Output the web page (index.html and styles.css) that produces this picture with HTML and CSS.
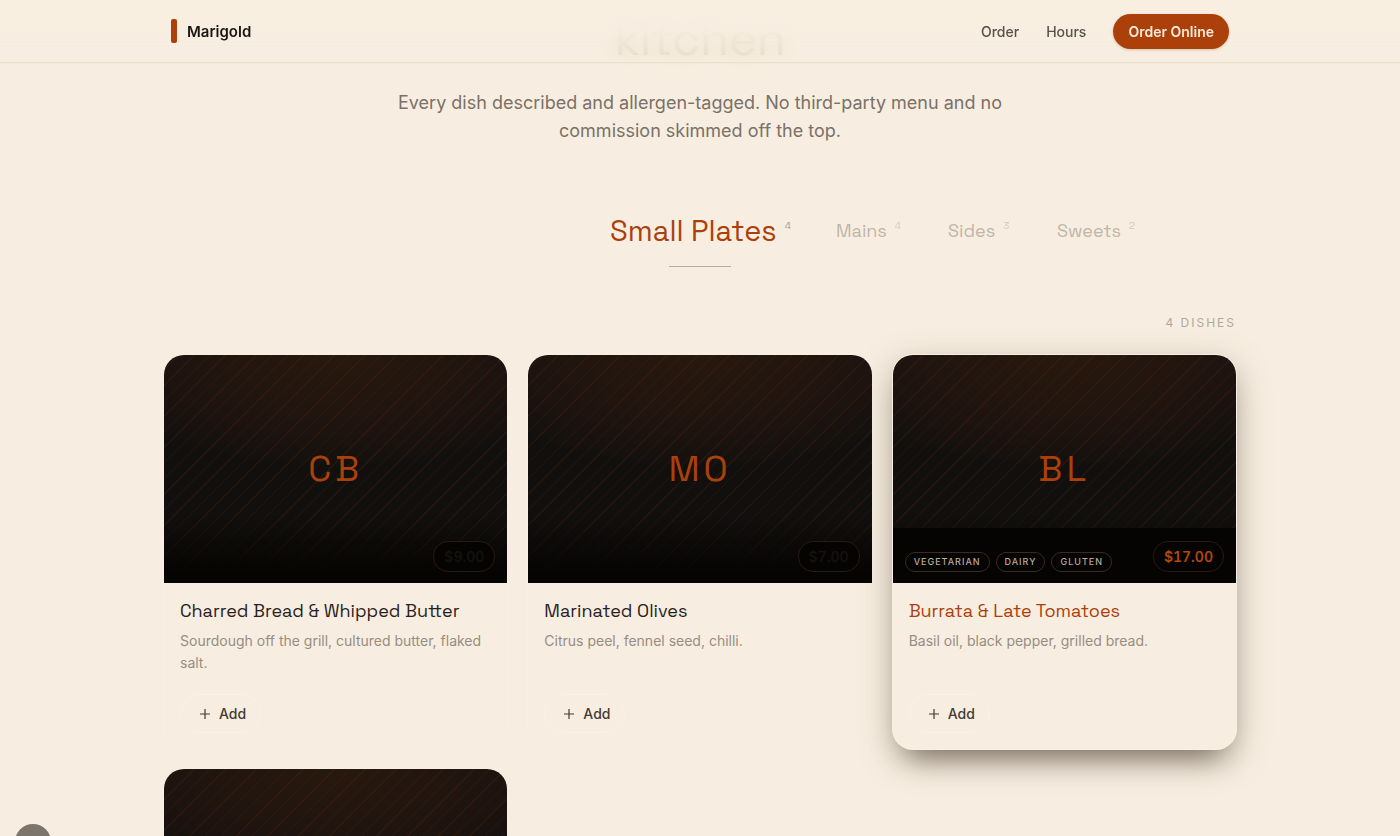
FILE: index.html
```html
<!DOCTYPE html>
<html lang="en">
<head>
<meta charset="utf-8">
<meta name="viewport" content="width=device-width, initial-scale=1">
<title>Marigold</title>
<link rel="stylesheet" href="styles.css">
</head>
<body>
<header class="site-header">
  <div class="header-inner">
    <a class="brand" href="#"><span class="brand-mark"></span>Marigold</a>
    <nav class="site-nav">
      <a href="#order">Order</a>
      <a href="#hours">Hours</a>
      <a class="nav-cta" href="#online">Order Online</a>
    </nav>
  </div>
</header>
<main class="page">
  <h1 class="hero-title">kitchen</h1>
  <p class="lead">Every dish described and allergen-tagged. No third-party menu and no commission skimmed off the top.</p>
  <div class="tabs" role="tablist">
    <button class="tab tab-active" role="tab" aria-selected="true">Small Plates<sup>4</sup></button>
    <button class="tab" role="tab" aria-selected="false">Mains<sup>4</sup></button>
    <button class="tab" role="tab" aria-selected="false">Sides<sup>3</sup></button>
    <button class="tab" role="tab" aria-selected="false">Sweets<sup>2</sup></button>
  </div>
  <div class="tab-rule"></div>
  <p class="count">4 DISHES</p>
  <section class="grid">
    <article class="card">
      <div class="photo"><span class="initials">CB</span><span class="price">$9.00</span></div>
      <div class="card-body">
        <h2>Charred Bread &amp; Whipped Butter</h2>
        <p>Sourdough off the grill, cultured butter, flaked salt.</p>
        <button class="add"><svg viewBox="0 0 12 12" aria-hidden="true"><path d="M6 1v10M1 6h10"/></svg>Add</button>
      </div>
    </article>
    <article class="card">
      <div class="photo"><span class="initials">MO</span><span class="price">$7.00</span></div>
      <div class="card-body">
        <h2>Marinated Olives</h2>
        <p>Citrus peel, fennel seed, chilli.</p>
        <button class="add"><svg viewBox="0 0 12 12" aria-hidden="true"><path d="M6 1v10M1 6h10"/></svg>Add</button>
      </div>
    </article>
    <article class="card card-raised">
      <div class="photo">
        <span class="initials">BL</span>
        <div class="tags"><span>VEGETARIAN</span><span>DAIRY</span><span>GLUTEN</span></div>
        <span class="price">$17.00</span>
      </div>
      <div class="card-body">
        <h2>Burrata &amp; Late Tomatoes</h2>
        <p>Basil oil, black pepper, grilled bread.</p>
        <button class="add"><svg viewBox="0 0 12 12" aria-hidden="true"><path d="M6 1v10M1 6h10"/></svg>Add</button>
      </div>
    </article>
    <article class="card"><div class="photo"></div></article>
  </section>
</main>
<div class="corner-dot"></div>
</body>
</html>
```
FILE: styles.css
```css
:root {
  --cream: #f7eee1;
  --ember: #ac400a;
  --display: "Space Grotesk", Inter, sans-serif;
}
* { box-sizing: border-box; }
body {
  margin: 0;
  height: 100vh;
  overflow: hidden;
  background: var(--cream);
  color: #2a211c;
  font-family: Inter, sans-serif;
}
h1, h2, p { margin: 0; }
a { color: inherit; text-decoration: none; }
button { font: inherit; border: 0; background: none; padding: 0; cursor: pointer; }

.site-header {
  position: fixed;
  inset: 0 0 auto;
  z-index: 2;
  border-bottom: 1px solid #e8dfcf;
  box-shadow: 0 1px 0 #f2e9da;
  background: linear-gradient(rgba(247, 238, 225, 0.9) 45%, rgba(247, 238, 225, 0) 90%);
}
.header-inner {
  display: flex;
  align-items: center;
  justify-content: space-between;
  max-width: 1058px;
  height: 62px;
  margin: 0 auto;
}
.brand {
  display: flex;
  align-items: center;
  gap: 10px;
  font-size: 15px;
  font-weight: 600;
  color: #1c1511;
}
.brand-mark { width: 6px; height: 24px; border-radius: 2px; background: var(--ember); }
.site-nav {
  display: flex;
  align-items: center;
  gap: 27px;
  font-size: 14px;
  font-weight: 500;
  color: #5a514a;
}
.nav-cta {
  padding: 9px 15px;
  border-radius: 18px;
  background: var(--ember);
  color: #f9ead8;
  font-weight: 600;
  line-height: 17px;
  box-shadow: 0 1px 3px #d8c3ab;
}

.page { max-width: 1072px; margin: 0 auto; }
.hero-title {
  padding: 9px 0 20px;
  font: 400 47px/60px var(--display);
  text-align: center;
  color: #e9e0ce;
  text-shadow: 0 0 18px #e0d8c0;
}
.lead {
  max-width: 610px;
  margin: 0 auto;
  text-align: center;
  font-size: 18px;
  line-height: 28px;
  color: #7b7168;
}
.tabs {
  display: grid;
  grid-template-columns: 226px 112px 109px 80px;
  align-items: center;
  padding: 65px 0 0 calc(50% - 90px);
}
.tab {
  display: flex;
  align-items: center;
  gap: 8px;
  height: 40px;
  font-family: var(--display);
  font-size: 18px;
  color: #bfb5a8;
  white-space: nowrap;
}
.tab sup { align-self: flex-start; margin-top: 10px; font-size: 10px; line-height: 12px; color: #d6ccbd; }
.tab-active { font-size: 29px; color: var(--ember); }
.tab-active sup { color: #a79c90; }
.tab-rule { width: 62px; height: 1px; margin: 16px auto 0; background: #b9ada0; }
.count {
  margin-top: 48px;
  text-align: right;
  font-size: 12px;
  line-height: 16px;
  letter-spacing: 2px;
  color: #b2a89b;
}

.grid { display: grid; grid-template-columns: repeat(3, minmax(0, 1fr)); gap: 20px 21px; padding-top: 24px; }
.card { border-radius: 20px; background: var(--cream); box-shadow: 0 0 0 1px #f8f0e4; }
.card-raised {
  box-shadow: 0 0 0 1px #f8f0e4, 0 10px 34px rgba(80, 65, 45, 0.36), 0 22px 28px -16px rgba(30, 20, 10, 0.5);
}
.photo {
  position: relative;
  display: grid;
  place-items: center;
  height: 228px;
  overflow: hidden;
  border-radius: 20px 20px 0 0;
  background:
    linear-gradient(transparent 70%, #060402 96%),
    repeating-linear-gradient(135deg, transparent 0 10px, rgba(90, 38, 16, 0.26) 10px 11px),
    radial-gradient(ellipse 75% 50% at 50% 0, #28190e, #1d130f 70%, #11100e 100%);
}
.initials { font: 400 36px/44px var(--display); letter-spacing: 4px; color: var(--ember); }
.price {
  position: absolute;
  right: 12px;
  bottom: 11px;
  padding: 6px 10px;
  border: 1px solid #2b1810;
  border-radius: 15px;
  background: #060402;
  color: #15110e;
  font-size: 14px;
  font-weight: 600;
  font-variant-numeric: tabular-nums;
  line-height: 17px;
}
.card-raised .price { color: #b5460c; }
.tags {
  position: absolute;
  inset: auto 0 0;
  display: flex;
  align-items: flex-end;
  gap: 6px;
  height: 55px;
  padding: 0 12px 11px;
  background: #060402;
}
.tags span {
  padding: 3px 8px;
  border: 1px solid #3b2a22;
  border-radius: 10px;
  font-size: 9px;
  font-weight: 500;
  line-height: 12px;
  letter-spacing: 1px;
  color: #b8aa9d;
}
.card-body { padding: 16px; }
.card-body h2 { font: 400 18px/24px var(--display); }
.card-raised h2 { color: var(--ember); }
.card-body p { min-height: 44px; margin-top: 7px; font-size: 14px; line-height: 22px; color: #978d82; }
.add {
  display: flex;
  align-items: center;
  gap: 8px;
  height: 39px;
  margin-top: 20px;
  padding: 0 14px 0 18px;
  border: 1px solid #faf2e7;
  border-radius: 20px;
  font-size: 14px;
  font-weight: 500;
  color: #443a33;
}
.add svg { width: 12px; height: 12px; fill: none; stroke: currentColor; stroke-width: 1.2; }
.corner-dot {
  position: fixed;
  left: 15px;
  bottom: -24px;
  width: 36px;
  height: 36px;
  border-radius: 50%;
  background: #7c756b;
}
```
